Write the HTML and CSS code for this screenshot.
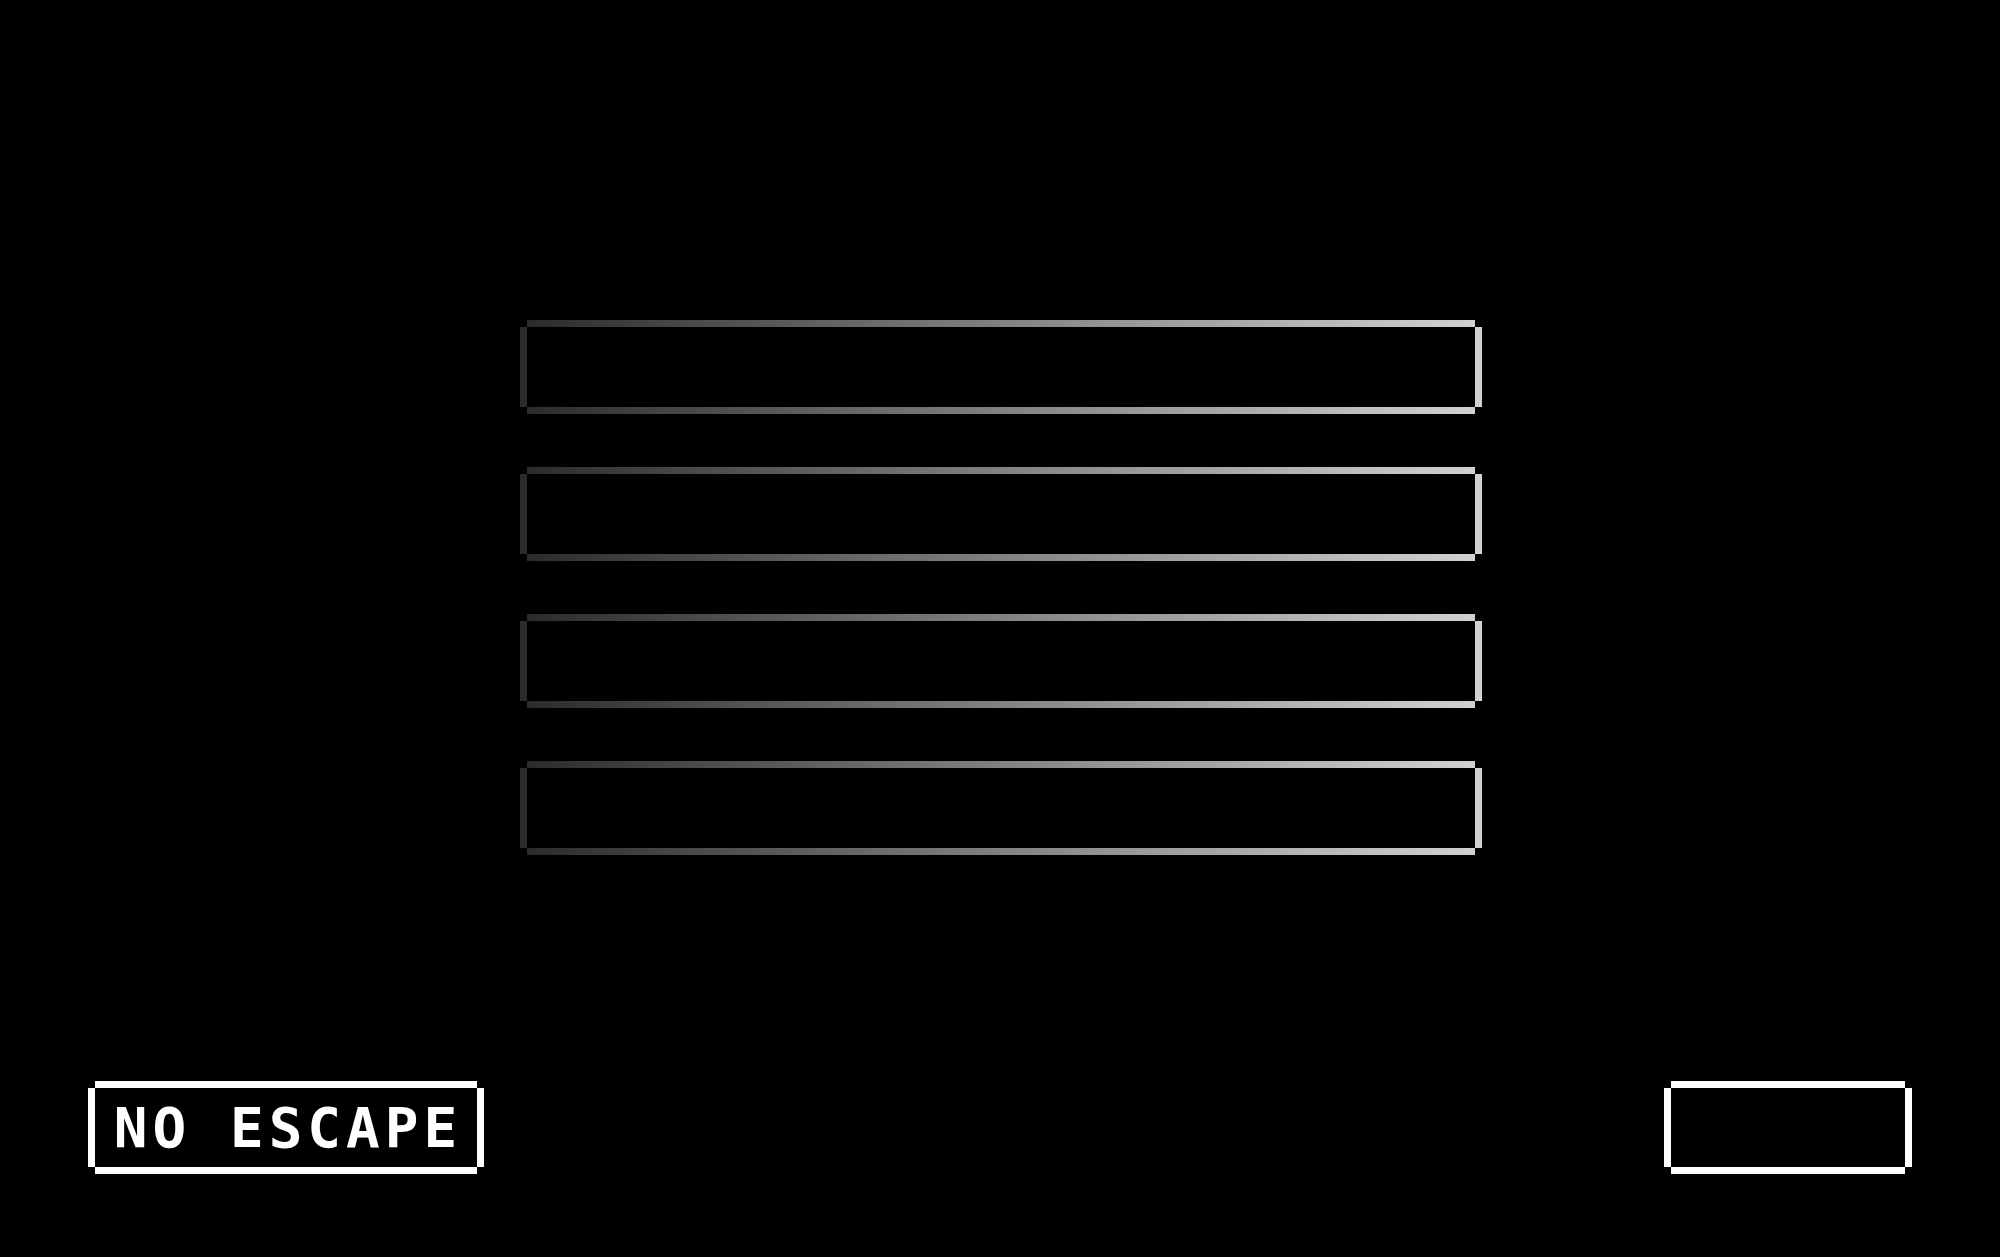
FILE: index.html
```html
<!DOCTYPE html>
<html lang="en">
<head>
    <meta charset="UTF-8">
    <meta name="viewport" content="width=device-width, initial-scale=1.0">
    <title>No Escape</title>
    <link rel="stylesheet" href="styles.css">
</head>
<body>
    <div class="screen">
        <div class="menu">
            <button class="slot"></button>
            <button class="slot"></button>
            <button class="slot"></button>
            <button class="slot"></button>
        </div>

        <div class="footer">
            <button class="pixel-btn">NO ESCAPE</button>
            <button class="pixel-btn blank"></button>
        </div>
    </div>
</body>
</html>
```

FILE: styles.css
```css
body {
    margin: 0;
    padding: 0;
    background: #000;
    font-family: "DejaVu Sans Mono", "Liberation Mono", monospace;
}
.screen {
    height: 1257px;
    display: flex;
    flex-direction: column;
}
.menu {
    display: flex;
    flex-direction: column;
    align-items: center;
    gap: 53px;
    padding-top: 320px;
    padding-left: 2px;
}
button {
    font-family: inherit;
    cursor: pointer;
    padding: 0;
}
/* corners are cut so the frame looks pixelated */
.slot, .pixel-btn {
    box-sizing: border-box;
    border: 7px solid transparent;
    clip-path: polygon(7px 0, calc(100% - 7px) 0, calc(100% - 7px) 7px, 100% 7px, 100% calc(100% - 7px), calc(100% - 7px) calc(100% - 7px), calc(100% - 7px) 100%, 7px 100%, 7px calc(100% - 7px), 0 calc(100% - 7px), 0 7px, 7px 7px);
}
.slot {
    width: 962px;
    height: 94px;
    background: linear-gradient(#000, #000) padding-box,
                linear-gradient(90deg, #2a2a2a 0%, #8a8a8a 55%, #d2d2d2 100%) border-box;
}
.footer {
    margin-top: auto;
    display: flex;
    justify-content: space-between;
    padding: 0 88px 83px 88px;
}
.pixel-btn {
    height: 93px;
    width: 396px;
    background: linear-gradient(#000, #000) padding-box,
                linear-gradient(#fff, #fff) border-box;
    color: #fff;
    font-size: 56px;
    font-weight: bold;
    letter-spacing: 5px;
    padding-left: 4px;
    line-height: 1;
}
.pixel-btn.blank {
    width: 248px;
}
```
